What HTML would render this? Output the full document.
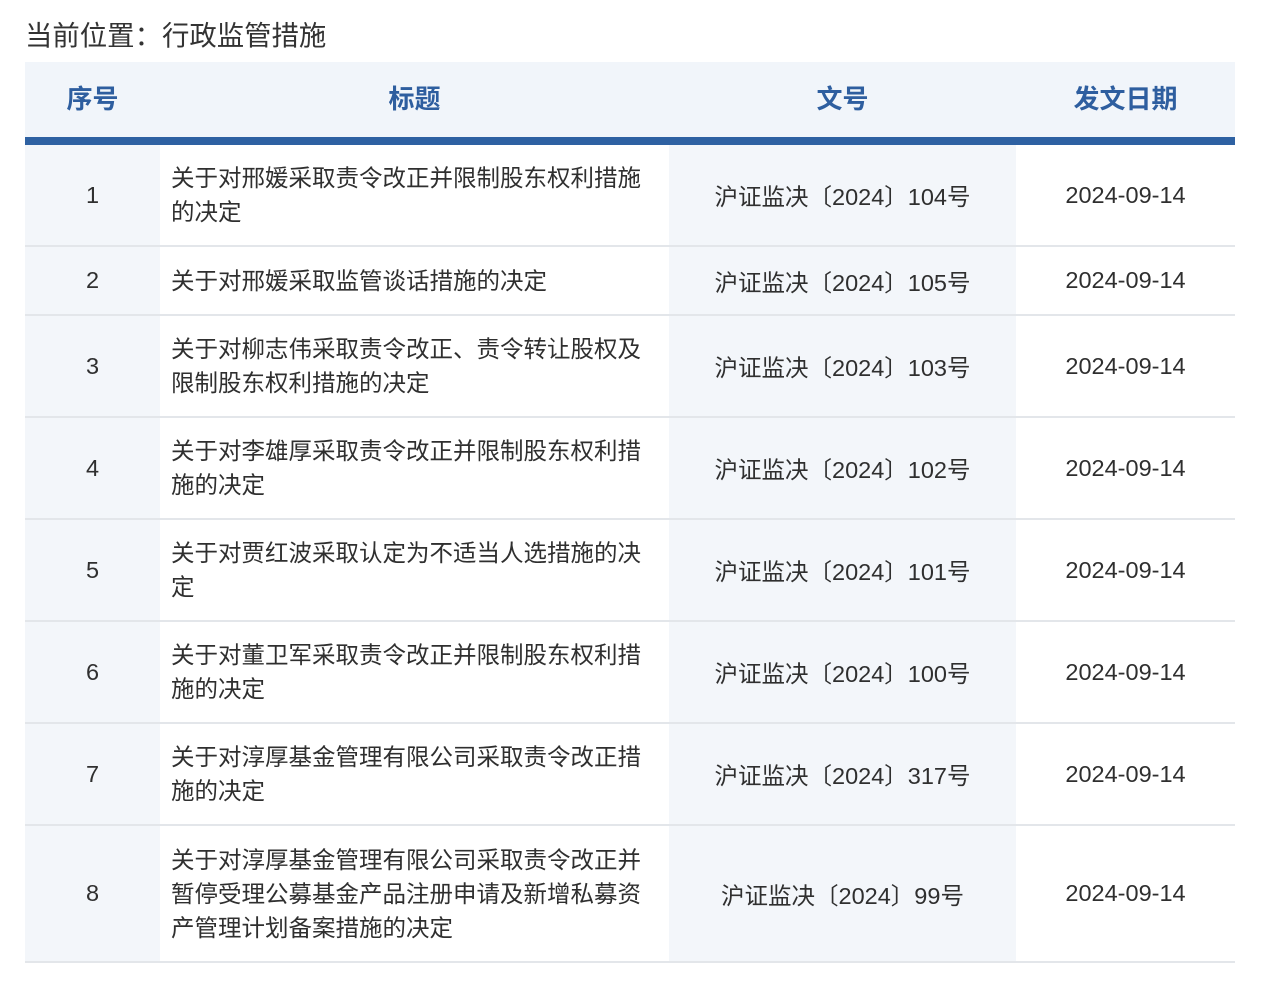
<!DOCTYPE html>
<html><head><meta charset="utf-8"><style>
body{margin:0;width:1284px;height:982px;background:#fff;font-family:"Liberation Sans","Noto Sans CJK SC",sans-serif;color:#333;position:relative;overflow:hidden}
.t{position:absolute;left:25px;top:13px;font-size:27.4px;color:#333}
.hd{position:absolute;left:25px;top:62px;width:1210px;height:75px;background:#f1f5fa}
.bar{position:absolute;left:25px;top:137px;width:1210px;height:8px;background:#2e61a2}
.h{position:absolute;top:62px;height:75px;line-height:75px;text-align:center;font-size:26px;font-weight:bold;color:#2e5e9f}
.row{position:absolute;left:25px;width:1210px;border-bottom:2px solid #e3e6ea;box-sizing:border-box}
.cell{position:absolute;top:0;height:100%;display:flex;align-items:center;font-size:23.5px;color:#2f2f2f}
.n{left:0;width:135px;justify-content:center;background:#f3f6fa}
.ti{left:135px;width:509px;padding-left:11px;box-sizing:border-box;font-size:23.5px;line-height:34px;padding-right:25px}
.w{left:644px;width:347px;justify-content:center;background:#f3f6fa}
.d{left:991px;width:219px;justify-content:center}
</style></head><body>
<div class="t">当前位置：行政监管措施</div>
<div class="hd"></div>
<div class="h" style="left:25px;width:135px">序号</div>
<div class="h" style="left:160px;width:509px">标题</div>
<div class="h" style="left:669px;width:347px">文号</div>
<div class="h" style="left:1016px;width:219px">发文日期</div>
<div class="bar"></div>

<div class="row" style="top:145px;height:102px"><div class="cell n">1</div><div class="cell ti">关于对邢媛采取责令改正并限制股东权利措施的决定</div><div class="cell w">沪证监决〔2024〕104号</div><div class="cell d">2024-09-14</div></div>
<div class="row" style="top:247px;height:69px"><div class="cell n">2</div><div class="cell ti">关于对邢媛采取监管谈话措施的决定</div><div class="cell w">沪证监决〔2024〕105号</div><div class="cell d">2024-09-14</div></div>
<div class="row" style="top:316px;height:102px"><div class="cell n">3</div><div class="cell ti">关于对柳志伟采取责令改正、责令转让股权及限制股东权利措施的决定</div><div class="cell w">沪证监决〔2024〕103号</div><div class="cell d">2024-09-14</div></div>
<div class="row" style="top:418px;height:102px"><div class="cell n">4</div><div class="cell ti">关于对李雄厚采取责令改正并限制股东权利措施的决定</div><div class="cell w">沪证监决〔2024〕102号</div><div class="cell d">2024-09-14</div></div>
<div class="row" style="top:520px;height:102px"><div class="cell n">5</div><div class="cell ti">关于对贾红波采取认定为不适当人选措施的决定</div><div class="cell w">沪证监决〔2024〕101号</div><div class="cell d">2024-09-14</div></div>
<div class="row" style="top:622px;height:102px"><div class="cell n">6</div><div class="cell ti">关于对董卫军采取责令改正并限制股东权利措施的决定</div><div class="cell w">沪证监决〔2024〕100号</div><div class="cell d">2024-09-14</div></div>
<div class="row" style="top:724px;height:102px"><div class="cell n">7</div><div class="cell ti">关于对淳厚基金管理有限公司采取责令改正措施的决定</div><div class="cell w">沪证监决〔2024〕317号</div><div class="cell d">2024-09-14</div></div>
<div class="row" style="top:826px;height:137px"><div class="cell n">8</div><div class="cell ti">关于对淳厚基金管理有限公司采取责令改正并暂停受理公募基金产品注册申请及新增私募资产管理计划备案措施的决定</div><div class="cell w">沪证监决〔2024〕99号</div><div class="cell d">2024-09-14</div></div>
</body></html>
